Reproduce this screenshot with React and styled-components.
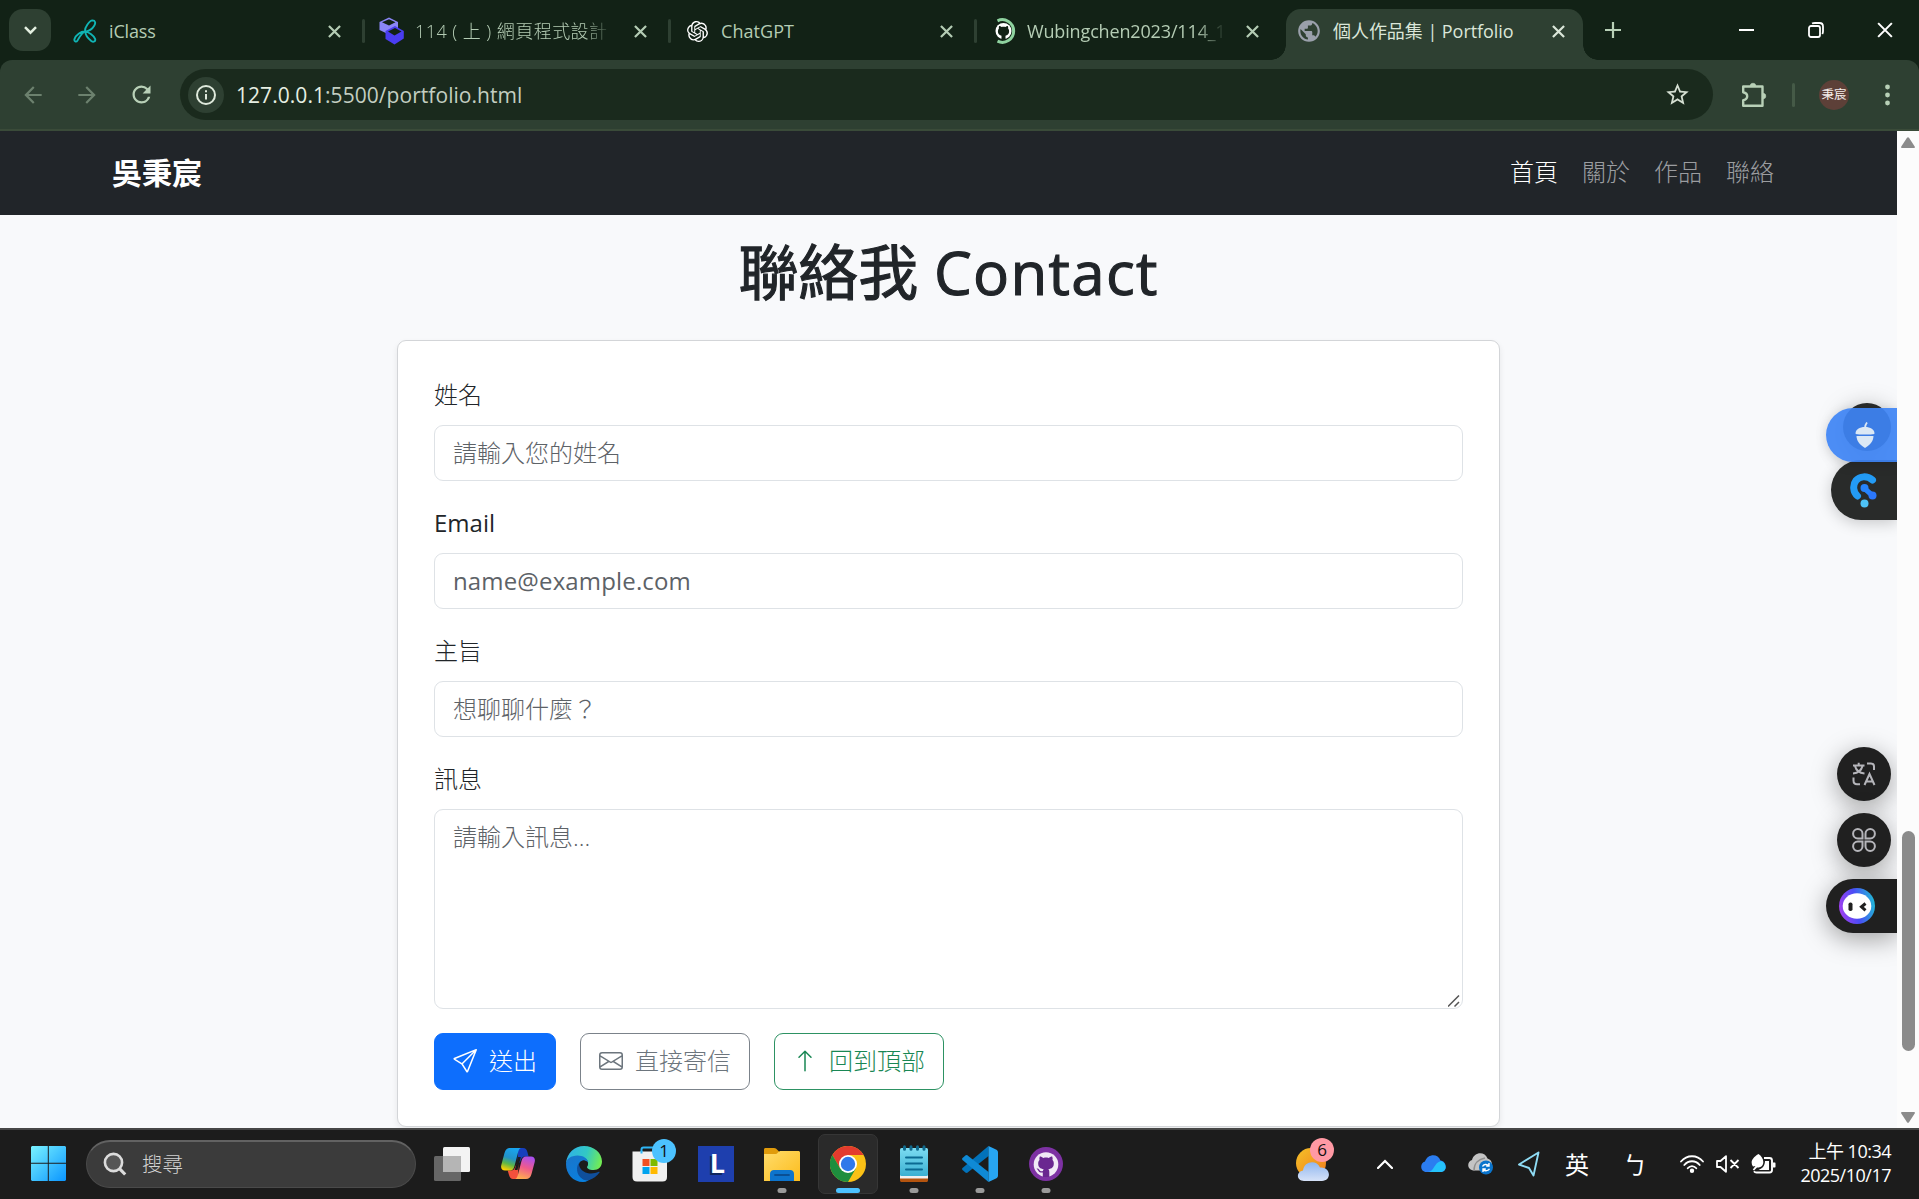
import React from "react";
import styled, { createGlobalStyle, css } from "styled-components";
import { BsSend, BsEnvelope, BsArrowUp } from "react-icons/bs";
import { SiOpenai } from "react-icons/si";
import {
  MdArrowBack,
  MdArrowForward,
  MdRefresh,
  MdStarBorder,
  MdPublic,
} from "react-icons/md";

const ui = `"Open Sans", "Noto Sans CJK TC", sans-serif`;

const GlobalStyle = createGlobalStyle`
  *, *::before, *::after { box-sizing: border-box; }
  html, body { margin: 0; padding: 0; overflow: hidden; }
  body { font-family: ${ui}; background: #f8f9fb; }
  svg { display: block; flex: none; }
`;

const Screen = styled.div`
  width: 1919px;
  height: 1199px;
  display: flex;
  flex-direction: column;
  overflow: hidden;
`;

/* ---------- Browser chrome ---------- */

const TabStrip = styled.div`
  height: 60px;
  flex: none;
  display: flex;
  background: #122216;
  padding: 9px 0 0 9px;
`;

const TabSearch = styled.div`
  width: 42px;
  height: 42px;
  margin-right: 11px;
  border-radius: 14px;
  background: #2e4032;
  display: flex;
  align-items: center;
  justify-content: center;
`;

const Tab = styled.div`
  position: relative;
  width: 306px;
  height: 51px;
  padding: 0 0 7px 11px;
  display: flex;
  align-items: center;
  color: ${(p) => (p.$active ? "#dbe6d9" : "#b4ccb4")};
  ${(p) =>
    p.$active &&
    css`
      width: 297px;
      background: #2e4032;
      border-radius: 15px 15px 0 0;
      &::before,
      &::after {
        content: "";
        position: absolute;
        bottom: 0;
        width: 15px;
        height: 15px;
      }
      &::before {
        left: -15px;
        background: radial-gradient(circle at 0 0, transparent 14.5px, #2e4032 15px);
      }
      &::after {
        right: -15px;
        background: radial-gradient(circle at 100% 0, transparent 14.5px, #2e4032 15px);
      }
    `}
`;

const TabIcon = styled.div`
  width: 24px;
  height: 24px;
  flex: none;
  display: flex;
  align-items: center;
  justify-content: center;
  margin-right: 12px;
`;

const TabTitle = styled.div`
  width: 201px;
  flex: none;
  overflow: hidden;
  white-space: nowrap;
  font-size: 18px;
  line-height: 30px;
  letter-spacing: ${(p) => p.$track || 0}px;
  font-weight: ${(p) => p.$weight || 400};
  ${(p) =>
    p.$fade &&
    css`
      mask-image: linear-gradient(90deg, #000 168px, transparent 199px);
    `}
`;

const CloseSlot = styled.div`
  width: 24px;
  margin-left: 12px;
  display: flex;
  justify-content: center;
`;

const Separator = styled.div`
  width: 3px;
  height: 24px;
  border-radius: 2px;
  margin-left: 16px;
  background: #2e4032;
`;

const NewTab = styled.div`
  width: 60px;
  height: 42px;
  display: flex;
  align-items: center;
  justify-content: center;
`;

const WindowControls = styled.div`
  margin-left: auto;
  height: 41px;
  display: flex;
  color: #fff;
`;

const WindowButton = styled.div`
  width: 69px;
  display: flex;
  align-items: center;
  justify-content: center;
`;

const Toolbar = styled.div`
  height: 71px;
  flex: none;
  display: flex;
  background: #122216;
`;

const ToolbarFace = styled.div`
  flex: 1;
  height: 71px;
  border-radius: 12px 12px 0 0;
  border-bottom: 2px solid #3a4b39;
  background: #2e4032;
  display: flex;
  align-items: center;
  padding: 0 5px 0 6px;
  color: #b8d0b7;
`;

const ToolButton = styled.div`
  width: 54px;
  height: 51px;
  margin-left: ${(p) => p.$gap || 0}px;
  display: flex;
  align-items: center;
  justify-content: center;
  opacity: ${(p) => (p.$dim ? 0.45 : 1)};
`;

const Omnibox = styled.div`
  width: 1533px;
  height: 51px;
  margin-left: 12px;
  padding: 0 22px 0 8px;
  border-radius: 26px;
  background: #1a2a1d;
  display: flex;
  align-items: center;
`;

const SiteInfo = styled.div`
  width: 36px;
  height: 36px;
  border-radius: 50%;
  background: #2e4032;
  display: flex;
  align-items: center;
  justify-content: center;
`;

const Url = styled.div`
  flex: 1;
  margin-left: 12px;
  font-size: 21px;
  line-height: 28px;
  letter-spacing: 0.05px;
  color: #c3cec1;
  b {
    font-weight: 400;
    color: #e6efe3;
  }
`;

const ToolDivider = styled.div`
  width: 3px;
  height: 24px;
  border-radius: 2px;
  margin: 0 24px 0 11px;
  background: #455a47;
`;

const Avatar = styled.div`
  width: 30px;
  height: 30px;
  border-radius: 50%;
  background: #5d4038;
  color: #f5eeec;
  font-size: 12.5px;
  font-weight: 400;
  line-height: 29px;
  text-align: center;
  white-space: nowrap;
`;

/* ---------- Page ---------- */

const Viewport = styled.div`
  height: 997px;
  flex: none;
  display: flex;
  position: relative;
`;

const Page = styled.div`
  width: 1897px;
  height: 997px;
  overflow: hidden;
  display: flex;
  flex-direction: column;
  align-items: center;
  background: #f8f9fb;
  color: #212529;
`;

const Navbar = styled.nav`
  width: 100%;
  height: 84px;
  flex: none;
  padding: 0 111px 2px 112px;
  display: flex;
  align-items: center;
  justify-content: space-between;
  background: #212529;
`;

const Brand = styled.div`
  font-size: 30px;
  font-weight: 700;
  line-height: 45px;
  color: #fff;
`;

const NavLinks = styled.div`
  display: flex;
`;

const NavLink = styled.a`
  padding: 0 12px;
  font-size: 24px;
  font-weight: 300;
  line-height: 36px;
  color: ${(p) => (p.$active ? "#fff" : "#9b9da0")};
`;

const Title = styled.h2`
  margin: 21px 0 32px;
  font-size: 60px;
  font-weight: 400;
  line-height: 72px;
  -webkit-text-stroke: 1.1px #212529;
  span {
    letter-spacing: 1.3px;
  }
`;

const Card = styled.form`
  width: 1103px;
  height: 787px;
  flex: none;
  padding: 36px;
  border: 1px solid #d3d5d8;
  border-radius: 9px;
  background: #fff;
  box-shadow: 0 3px 6px rgba(0, 0, 0, 0.075);
  display: flex;
  flex-direction: column;
`;

const Field = styled.div`
  display: flex;
  flex-direction: column;
  margin-bottom: 24px;
  position: relative;
`;

const Label = styled.label`
  margin-bottom: 12px;
  font-size: 24px;
  line-height: 36px;
  font-weight: ${(p) => p.$weight || 300};
`;

const controlStyle = css`
  display: block;
  width: 100%;
  margin: 0;
  border: 1px solid #dee2e6;
  border-radius: 9px;
  outline: none;
  background: #fff;
  font-family: ${ui};
  font-size: 24px;
  line-height: 36px;
  font-weight: ${(p) => p.$weight || 300};
  letter-spacing: ${(p) => p.$track || 0}px;
  &::placeholder {
    color: #5d6267;
    opacity: 1;
  }
`;

const Input = styled.input`
  ${controlStyle}
  height: 56px;
  padding: 8px 18px 10px;
`;

const TextArea = styled.textarea`
  ${controlStyle}
  height: 200px;
  padding: 9px 18px 8px;
  resize: none;
`;

const Grip = styled.svg`
  position: absolute;
  right: 3px;
  bottom: 2px;
`;

const Actions = styled.div`
  display: flex;
  gap: 24px;
`;

const Button = styled.button`
  height: 57px;
  padding: 0 18px 2px;
  display: flex;
  align-items: center;
  gap: 12px;
  border: 1px solid ${(p) => p.$edge};
  border-radius: 9px;
  background: ${(p) => p.$fill || "#fff"};
  color: ${(p) => p.$ink};
  font-family: ${ui};
  font-size: 24px;
  font-weight: 300;
  line-height: 36px;
`;

const Scrollbar = styled.div`
  width: 22px;
  height: 997px;
  padding: 6px 0 5px;
  background: #fcfcfc;
  display: flex;
  flex-direction: column;
  align-items: center;
`;

const Thumb = styled.div`
  width: 13px;
  height: 220px;
  margin-top: 683px;
  margin-bottom: auto;
  border-radius: 7px;
  background: #8b8b8b;
`;

const Floating = styled.div`
  position: absolute;
  top: ${(p) => p.$top}px;
  right: ${(p) => (p.$round ? 28 : 22)}px;
  width: ${(p) => p.$w}px;
  height: ${(p) => p.$h}px;
  padding-left: ${(p) => p.$pad || 0}px;
  border-radius: ${(p) => (p.$round ? "50%" : `${p.$h / 2}px 0 0 ${p.$h / 2}px`)};
  background: ${(p) => p.$bg || "#202020"};
  box-shadow: ${(p) => p.$shadow || "0 6px 26px rgba(0, 0, 0, 0.36)"};
  clip-path: inset(-60px ${(p) => (p.$round ? -6 : 0)}px -60px -60px);
  display: flex;
  align-items: center;
  justify-content: ${(p) => (p.$round ? "center" : "flex-start")};
`;

/* ---------- Taskbar ---------- */

const Taskbar = styled.div`
  height: 71px;
  flex: none;
  border-top: 2px solid #474747;
  background: #1c1c1c;
  display: flex;
  align-items: center;
  padding-bottom: 2px;
  color: #fff;
`;

const StartButton = styled.div`
  width: 86px;
  padding: 0 0 0 31px;
`;

const SearchBox = styled.div`
  width: 330px;
  height: 48px;
  margin-right: 3px;
  border: 1px solid #4a4a4a;
  border-top: 2px solid #626262;
  border-radius: 24px;
  background: #3b3b3b;
  display: flex;
  align-items: center;
  padding: 0 0 1px 16px;
  font-size: 20.5px;
  font-weight: 300;
  line-height: 30px;
  color: #d2d2d2;
  gap: 15px;
`;

const AppSlot = styled.div`
  position: relative;
  width: 66px;
  height: 69px;
  display: flex;
  align-items: center;
  justify-content: center;
  &::after {
    content: "";
    position: absolute;
    left: 50%;
    bottom: 5px;
    transform: translateX(-50%);
    height: 5px;
    border-radius: 3px;
    width: ${(p) => (p.$active ? 24 : p.$open ? 9 : 0)}px;
    background: ${(p) => (p.$active ? "#4cc2ff" : "#9a9a9a")};
  }
`;

const ActiveTile = styled.div`
  width: 60px;
  height: 60px;
  border: 1px solid #363636;
  border-radius: 7px;
  background: #2a2a2a;
  display: flex;
  align-items: center;
  justify-content: center;
`;

const Badge = styled.div`
  position: absolute;
  top: ${(p) => p.$top}px;
  left: ${(p) => p.$left}px;
  width: 24px;
  height: 24px;
  border-radius: 50%;
  background: ${(p) => p.$bg};
  color: #111;
  font-size: 17px;
  line-height: 24px;
  text-align: center;
`;

const Tray = styled.div`
  margin-left: auto;
  height: 69px;
  display: flex;
  align-items: center;
`;

const TraySlot = styled.div`
  position: relative;
  width: ${(p) => p.$w}px;
  height: 69px;
  display: flex;
  align-items: center;
  justify-content: center;
  font-size: 24px;
`;

const Clock = styled.div`
  width: 106px;
  padding-bottom: 1px;
  margin-right: 28px;
  text-align: right;
  white-space: nowrap;
  font-size: 18px;
  line-height: 24px;
  letter-spacing: -0.5px;
`;

/* ---------- Drawings ---------- */

const CloseIcon = ({ size = 13, stroke = 2.4 }) => (
  <svg width={size} height={size} viewBox="0 0 14 14" stroke="currentColor" strokeWidth={stroke} fill="none">
    <path d="M1 1l12 12M13 1L1 13" />
  </svg>
);

const IClassIcon = () => (
  <svg width="24" height="24" viewBox="0 0 24 24" fill="none" stroke="#10b5b5" strokeWidth="1.9" strokeLinejoin="round">
    <path d="M12.3 12.6C11 9 16.5 1.5 19.5 1.4c3 0 3.3 2.800 1.700 5.300C19 10.500 15.500 12 12.300 12.600C9 13 6 19 4.500 21.500c-1.300 2-3.700 1-3-1.500C2.500 16.500 8 12 12.300 12.600z" />
    <path d="M12.300 12.600c3 0 8.500 3.900 9.800 7.200c.8 2.800-1.700 3.700-3.800 2.200c-3-2.300-6-5.500-6-9.400z" />
  </svg>
);

const CubesIcon = () => (
  <svg width="25" height="28" viewBox="0 0 25 28">
    <path d="M.5 5L10 .5l9 4.500v8L10 17.500.5 13z" fill="#8a86f6" />
    <path d="M3 5.300L10 2.200l6.500 3-6.500 3.300z" fill="#122216" />
    <path d="M6.500 14L16 9l8.800 5v7.500L15.500 27.500 6.500 22z" fill="#4a3df2" />
    <path d="M9 14.500l7-3.500 6.500 3.500-7 4z" fill="#122216" />
  </svg>
);

const LoadingGithub = () => (
  <svg width="30" height="30" viewBox="0 0 30 30">
    <path d="M9.500 4.800A11.300 11.300 0 1 1 9.500 25.200" fill="none" stroke="#8fd3a0" strokeWidth="3" />
    <circle cx="15.500" cy="15" r="8" fill="#fff" />
    <path
      d="M13.500 23v-3.200c-2.800-.8-3.600-2.300-3.600-4.600 0-1.200.4-2 1-2.700-.2-.8-.1-1.800.2-2.500 1 0 1.800.4 2.500 1 1.200-.3 2.600-.3 3.800 0 .7-.6 1.500-1 2.500-1 .3.700.4 1.700.2 2.500.6.700 1 1.500 1 2.700 0 2.300-.8 3.800-3.600 4.600V23z"
      fill="#122216"
    />
  </svg>
);

const InfoIcon = () => (
  <svg width="20" height="20" viewBox="0 0 20 20" fill="none" stroke="#dfe9dc" strokeWidth="2">
    <circle cx="10" cy="10" r="9" />
    <path d="M10 9v5.500M10 5.300v2" />
  </svg>
);

const ExtensionsIcon = () => (
  <svg width="26" height="26" viewBox="0 0 26 26" stroke="#b8d0b7">
    <path
      d="M2.200 4.500h19.300v19.300H2.200v-5.600c2.600-.6 4-2 4-4s-1.400-3.500-4-4z"
      fill="none"
      strokeWidth="2.400"
      strokeLinejoin="round"
    />
    <path d="M9.200 4a2.800 2.800 0 0 1 5.600 0zM22 11.300a2.800 2.800 0 0 1 0 5.600z" fill="#b8d0b7" strokeWidth=".6" />
  </svg>
);

const WindowsLogo = () => (
  <svg width="35" height="35" viewBox="0 0 35 35">
    <defs>
      <linearGradient id="win" x1="0" y1="0" x2="1" y2="1" gradientUnits="objectBoundingBox">
        <stop offset="0" stopColor="#7af3ff" />
        <stop offset="1" stopColor="#0a95ff" />
      </linearGradient>
    </defs>
    <path fill="url(#win)" d="M1 0h15.800v16.800H0V1zM17.800 0H34l1 1v15.800H17.800zM0 17.800h16.800V35H1l-1-1zM17.800 17.800H35V34l-1 1H17.800z" />
  </svg>
);

const SearchGlyph = () => (
  <svg width="24" height="24" viewBox="0 0 24 24" fill="none" stroke="#dcdcdc" strokeWidth="2.600">
    <circle cx="10.500" cy="10.500" r="8.600" fill="#565656" />
    <path d="M16.500 16.700l5.700 5.800" strokeWidth="3.200" />
  </svg>
);

const TaskView = () => (
  <svg width="36" height="36" viewBox="0 0 36 36">
    <rect x="9" y="1" width="27" height="25" rx="1.500" fill="#f3f3f3" />
    <rect x="0" y="10" width="27" height="25" rx="1.500" fill="#666" />
    <rect x="9" y="10" width="18" height="16" fill="#b5b5b5" />
  </svg>
);

const Copilot = () => (
  <svg width="34" height="31" viewBox="0 0 34 31">
    <defs>
      <linearGradient id="cpA" x1=".6" y1="0" x2=".3" y2="1">
        <stop offset="0" stopColor="#19a5f0" />
        <stop offset=".45" stopColor="#2292c8" />
        <stop offset=".72" stopColor="#5db648" />
        <stop offset="1" stopColor="#ffd000" />
      </linearGradient>
      <linearGradient id="cpB" x1=".7" y1="0" x2=".4" y2="1">
        <stop offset="0" stopColor="#a84ff0" />
        <stop offset=".5" stopColor="#ef5a8c" />
        <stop offset="1" stopColor="#ffac50" />
      </linearGradient>
    </defs>
    <path d="M17 0h5c2.500 0 3.700 1.500 4.400 4l1.200 4.500H24c-2.500 0-3.700 1.500-4.500 4.500l-3 4.500z" fill="#163fbd" />
    <path d="M17 31h-5c-2 0-3.200-1.500-4-4l-1.300-4.500H10c2.500 0 3.700-1.500 4.500-4.500l3-4.500z" fill="#f2503c" />
    <path d="M9 0h11.500c-2 0-2.800 2-3.500 4.500L13.500 18c-.8 3-2 4.500-4.500 4.500H4c-3 0-4.500-2-3.700-5.500L3.500 5C4.500 1.600 6 0 9 0z" fill="url(#cpA)" />
    <path d="M25 31H13.500c2 0 2.800-2 3.500-4.500L20.500 13c.8-3 2-4.500 4.500-4.500h5c3 0 4.500 2 3.700 5.500L30.500 26c-1 3.400-2.500 5-5.500 5z" fill="url(#cpB)" />
    <path d="M17.200 9h2.600l-3.300 13h-2.800z" fill="#1c1c1c" />
  </svg>
);

const Edge = () => (
  <svg width="36" height="36" viewBox="0 0 36 36">
    <defs>
      <linearGradient id="edT" x1="0" y1=".3" x2="1" y2=".5">
        <stop offset="0" stopColor="#2fb0e8" />
        <stop offset=".55" stopColor="#32c8c4" />
        <stop offset="1" stopColor="#72ec54" />
      </linearGradient>
      <linearGradient id="edB" x1="0" y1="0" x2=".6" y2="1">
        <stop offset="0" stopColor="#1b74c8" />
        <stop offset="1" stopColor="#0880e0" />
      </linearGradient>
    </defs>
    <path d="M0 17C1 7 8.500 0 18 0c10 0 18 7 18 15.500 0 5-3.500 8.500-8.500 8.500-4.500 0-6.500-1.500-6.500-3 0-1 1-1.500 1-4 0-3.500-4-6-8.500-6C7.500 11 2 13.500 0 17z" fill="url(#edT)" />
    <path d="M0 18c0-5 5-8.500 11.500-8.500 5.500 0 10.500 2.700 10.500 7.500-1-1.600-2.700-2.500-4.500-2.500-4 0-6 4-4 9 2.300 6.500 9 8 13 7-2.500 3.500-6 5.500-9.500 5.500C7 36 0 28 0 18z" fill="url(#edB)" />
    <path d="M13.800 16C9.500 20 10 29 16.500 33c2 1.300 4.300 1.700 6 1.300C27 33 31 30 33.500 26.500c.4-.7-.2-1-.8-.7C25 29.500 15.500 27 13.300 20c-.5-1.600-.2-3 .5-4z" fill="#0f4f9c" />
    <path d="M22 17c-.8-2-3-3-5-2.400-2.800 1-3 5-1.500 7.400 1.500 2.300 4 3.800 7 4.200-2-1.200-2.500-3.400-1.500-5.200.7-1.200 1-2.600 1-4z" fill="#1c1c1c" />
  </svg>
);

const Store = () => (
  <svg width="36" height="36" viewBox="0 0 36 36">
    <path d="M9.500 8V3.500c0-1.300.7-2 2-2h13c1.300 0 2 .7 2 2V8" fill="none" stroke="#2eb5f5" strokeWidth="2" />
    <path d="M.5 5.500h34.500V31c0 3-1.500 4.500-4.500 4.500H5C2 35.500.5 34 .5 31z" fill="#f0f0f0" />
    <path d="M9.500 5v2.500" stroke="#2eb5f5" strokeWidth="2" />
    <rect x="10.500" y="13" width="7" height="7" fill="#f25022" />
    <rect x="18.500" y="13" width="7" height="7" fill="#7fba00" />
    <rect x="10.500" y="21" width="7" height="7" fill="#00a4ef" />
    <rect x="18.500" y="21" width="7" height="7" fill="#ffb900" />
  </svg>
);

const LTile = styled.div`
  width: 36px;
  height: 36px;
  padding-left: 3px;
  background: #1e3fae;
  color: #fff;
  font-size: 27px;
  font-weight: 700;
  line-height: 34px;
  text-align: center;
  text-shadow: -2px 2px 0 #10275e;
`;

const Folder = () => (
  <svg width="36" height="36" viewBox="0 0 36 36">
    <defs>
      <linearGradient id="fd" x1="0" y1="0" x2="1" y2="1">
        <stop offset="0" stopColor="#ffdc6b" />
        <stop offset="1" stopColor="#fcbc1c" />
      </linearGradient>
    </defs>
    <path d="M0 3.500C0 2.500.7 2 1.500 2H10c1.500 0 2.500.8 3.500 2l1.500 1.500V10H0z" fill="#e09b0b" />
    <path d="M0 8h11c1.500 0 2-.5 3-1.500s1.500-1.500 3-1.500h17.500c.8 0 1.500.7 1.500 1.500V35H0z" fill="url(#fd)" />
    <path d="M6 35v-7c0-2.500 1.500-4 4-4h16c2.500 0 4 1.500 4 4v7z" fill="#0d74cd" />
    <path d="M11 29h14" stroke="#0a4f94" strokeWidth="1.800" strokeLinecap="round" />
  </svg>
);

const Chrome = () => (
  <svg width="36" height="36" viewBox="0 0 36 36">
    <circle cx="18" cy="18" r="18" fill="#fbc116" />
    <path d="M2.400 9A18 18 0 0 1 33.600 9H18L10.200 22.500z" fill="#e33b2e" />
    <path d="M2.400 9A18 18 0 0 0 18 36L25.800 22.500 10.200 22.500z" fill="#1e8e3e" />
    <circle cx="18" cy="18" r="9" fill="#fff" />
    <circle cx="18" cy="18" r="7.200" fill="#2f78ea" />
  </svg>
);

const Notepad = () => (
  <svg width="28" height="37" viewBox="0 0 28 37">
    <defs>
      <linearGradient id="np" x1="0" y1="0" x2="0" y2="1">
        <stop offset="0" stopColor="#7cdcf2" />
        <stop offset="1" stopColor="#3bb0d2" />
      </linearGradient>
    </defs>
    <path d="M0 28h28v7.500c0 .8-.7 1.500-1.500 1.500h-25C.7 37 0 36.300 0 35.500z" fill="#b4540f" />
    <path d="M0 28h28v5.500H0z" fill="#f0f0f0" />
    <rect x="0" y="3" width="28" height="28" rx="1.500" fill="url(#np)" />
    <path d="M4.500 1.800v2.500M11 1.800v2.500M17.500 1.800v2.500M24 1.800v2.500" stroke="#10698c" strokeWidth="3" strokeLinecap="round" />
    <path d="M6 12.500h16M6 18.500h16M6 24.500h16" stroke="#0b6a92" strokeWidth="2" strokeLinecap="round" />
  </svg>
);

const VsCode = () => (
  <svg width="36" height="36" viewBox="0 0 36 36">
    <path d="M26.500 0v10L5 27l-1.300-.2L.5 24c-.6-.6-.6-1.400 0-2z" fill="#0272ba" />
    <path d="M26.500 36V26L5 9l-1.300.2L.5 12c-.6.600-.6 1.400 0 2z" fill="#0f8ad6" />
    <path d="M26.500 0L34 3.500c1.300.6 2 1.500 2 3v23c0 1.500-.7 2.400-2 3L26.500 36z" fill="#27a5f2" />
  </svg>
);

const GithubDesktop = () => (
  <svg width="34" height="34" viewBox="0 0 34 34">
    <circle cx="17" cy="17" r="17" fill="#7d31a3" />
    <circle cx="17" cy="17.500" r="12.300" fill="#f1e9f6" />
    <path
      d="M13.800 30v-4.600c-2 .4-3.500-.1-4.300-1.500-.5-1-1-1.700-1.900-2.200.9-.4 2 0 2.700 1 1 1.600 2 1.900 3.600 1.300.1-.8.400-1.300.8-1.700-3.500-.5-5.500-2-5.500-5.700 0-1.500.4-2.600 1.300-3.600-.3-1.200-.2-2.400.3-3.600 1.300 0 2.500.7 3.600 1.500 1.700-.5 3.500-.5 5.200 0 1.100-.8 2.300-1.500 3.600-1.500.5 1.200.6 2.400.3 3.600.9 1 1.300 2.100 1.300 3.600 0 3.700-2 5.200-5.500 5.700.7.600 1 1.400 1 2.600V30z"
      fill="#6a2790"
    />
  </svg>
);

const Weather = () => (
  <svg width="36" height="36" viewBox="0 0 36 36">
    <defs>
      <linearGradient id="sun" x1="0" y1="0" x2="1" y2="1">
        <stop offset="0" stopColor="#f5c228" />
        <stop offset="1" stopColor="#f07a1c" />
      </linearGradient>
      <linearGradient id="cld" x1="0" y1="0" x2="0" y2="1">
        <stop offset="0" stopColor="#8fb6ee" />
        <stop offset="1" stopColor="#d6e2f8" />
      </linearGradient>
    </defs>
    <circle cx="16" cy="17" r="15" fill="url(#sun)" />
    <path d="M9 35c-8 0-8-9.500-1-10.500C9 14.500 22 13.500 25 21.500c11-1 12 13.500 2 13.500z" fill="url(#cld)" />
  </svg>
);

const OneDrive = () => (
  <svg width="25" height="18" viewBox="0 0 25 18">
    <path d="M5.500 17C-1 17-1.500 8 4 6.500 7-1.500 17-1.500 19.500 5.500 26 6 27 17 19.500 17z" fill="#2b7df0" />
    <path d="M7 17c6 0 6-9.500 13-11 6.500 2 6 11-.5 11z" fill="#25c2fb" />
  </svg>
);

const SyncCloud = () => (
  <svg width="26" height="22" viewBox="0 0 26 22">
    <path d="M5.500 17.500C-1 17-1.500 8.500 4 7 6-1.500 17-2 19.500 5.500 26 7 25 17.500 19.500 17.500z" fill="#c4c4c4" />
    <path d="M6 17.500C6 10 11 6 17 5" fill="none" stroke="#8f8f8f" strokeWidth="1.500" />
    <circle cx="18" cy="14.500" r="7" fill="#0a74cc" />
    <path d="M14.500 13.500c1-2.200 4.500-2.800 6-.8M21 10v3h-2.800M21.500 15.700c-1 2.200-4.500 2.800-6 .8M15 19v-3h2.800" fill="none" stroke="#fff" strokeWidth="1.400" />
  </svg>
);

const PlaneIcon = () => (
  <svg width="22" height="26" viewBox="0 0 22 26" fill="none" stroke="#8fdcf5" strokeWidth="1.900" strokeLinejoin="round">
    <path d="M20.500 1.500L1 13.500l10 3.500 4.500 7.500z" />
  </svg>
);

const WifiIcon = () => (
  <svg width="24" height="18" viewBox="0 0 24 18" fill="none" stroke="#fff" strokeWidth="1.800" strokeLinecap="round">
    <path d="M1 6.500C7-.5 17-.5 23 6.500M4.300 10C8.500 5 15.500 5 19.700 10M7.700 13.300c2.400-3 6.200-3 8.600 0" />
    <circle cx="12" cy="15.700" r="1.300" fill="#fff" />
  </svg>
);

const MuteIcon = () => (
  <svg width="24" height="18" viewBox="0 0 24 18" fill="none" stroke="#fff" strokeWidth="1.800" strokeLinejoin="round">
    <path d="M1 6h3.500L10 1.200v15.600L4.500 12H1zM14.500 5l8 8M22.500 5l-8 8" />
  </svg>
);

const BatteryIcon = () => (
  <svg width="25" height="20" viewBox="0 0 25 20">
    <path d="M13 4h5.500c1.500 0 2.500 1 2.500 2.500V16c0 1.500-1 2.500-2.500 2.500h-13c-1.200 0-2-.5-2.500-1.300" fill="none" stroke="#fff" strokeWidth="1.900" />
    <path d="M22 8.500h1.500c.8 0 1 .5 1 1v3c0 .6-.2 1-1 1H22z" fill="#fff" />
    <path d="M7.500 0c2.700 2 4.800 4.500 4.800 8S10 13.800 6 13.500L3 16.500l-1.200-1L4.500 12 2 12.500C-.5 9 0 4.500 7.500 0zM14 7h4v9H7.500c4-1.500 6.500-4.500 6.500-9z" fill="#fff" />
  </svg>
);

const Acorn = () => (
  <svg width="20" height="26" viewBox="0 0 20 26" fill="#dbe8f5">
    <path d="M10 6c0-2 .8-4 2-5.500" fill="none" stroke="#dbe8f5" strokeWidth="1.800" />
    <path d="M.5 11.500C.5 7.500 4.500 5 10 5s9.500 2.500 9.500 6.500c0 .8-3 1-9.500 1s-9.500-.2-9.500-1z" />
    <path d="M1.500 14h17c0 5-3.500 9-8.500 12-5-3-8.500-7-8.500-12z" />
  </svg>
);

const HookIcon = () => (
  <svg width="27" height="35" viewBox="0 0 27 35" fill="none" strokeLinecap="round">
    <path d="M22.500 7C17 2.500 9.500 3 6 7.500S3 19 7.500 23" stroke="#239bf5" strokeWidth="7" />
    <path d="M14.500 15.500l8 7" stroke="#2683fb" strokeWidth="5" />
    <circle cx="14.500" cy="15" r="4" fill="#2683fb" />
    <circle cx="22.500" cy="22.500" r="4" fill="#2b77fc" />
    <circle cx="14.500" cy="30.500" r="4" fill="#4ec3f7" />
  </svg>
);

const TranslateIcon = () => (
  <svg width="24" height="24" viewBox="0 0 24 24" fill="none" stroke="#b5b5ba" strokeWidth="2">
    <path d="M1 3.500h11.500M6.700.8v2.700M3 4c1 4 4.500 7 9.500 7.500M10.500 4c-1 4-4.500 7-9.500 7.500" />
    <path d="M15 1.500h4c2 0 3 1 3 3V8M1.500 15.500v3c0 2.500 1 3.800 3.500 3.800h3M12.500 23l5-11 5 11M14.300 19.500h6.500" />
  </svg>
);

const CloverIcon = () => (
  <svg width="24" height="24" viewBox="0 0 24 24" fill="none" stroke="#b5b5ba" strokeWidth="2">
    <path d="M10.500 10.500H5.800A4.700 4.700 0 1 1 10.500 5.800zM13.500 10.500V5.800a4.700 4.700 0 1 1 4.700 4.700zM10.500 13.500v4.700a4.700 4.700 0 1 1-4.700-4.700zM13.500 13.500h4.700a4.700 4.700 0 1 1-4.700 4.700z" />
  </svg>
);

const BotIcon = () => (
  <svg width="36" height="36" viewBox="0 0 36 36">
    <defs>
      <linearGradient id="bot" x1="0" y1=".7" x2="1" y2=".5">
        <stop offset="0" stopColor="#a63ff0" />
        <stop offset=".5" stopColor="#4a4cf5" />
        <stop offset="1" stopColor="#22b5d8" />
      </linearGradient>
    </defs>
    <circle cx="18" cy="18" r="18" fill="url(#bot)" />
    <ellipse cx="18" cy="18" rx="14.300" ry="12.800" fill="#fff" />
    <rect x="9.500" y="14.500" width="4" height="8.500" rx="1.800" fill="#202020" />
    <path d="M26.500 15.500L22.500 18.800l4 3.500" fill="none" stroke="#202020" strokeWidth="3" />
  </svg>
);

const Triangle = ({ down }) => (
  <svg width="14" height="11" viewBox="0 0 14 11" fill="#8b8b8b">
    <path d={down ? "M1 0h12c1 0 1.200.8.700 1.600L8 10.200c-.5.800-1.500.8-2 0L.3 1.600C-.2.8 0 0 1 0z" : "M1 11h12c1 0 1.200-.8.700-1.600L8 .8C7.500 0 6.500 0 6 .8L.3 9.400C-.2 10.200 0 11 1 11z"} />
  </svg>
);

/* ---------- Composition ---------- */

const tabs = [
  { title: "iClass", icon: <IClassIcon />, track: -0.15 },
  { title: "114 ( 上 ) 網頁程式設計", icon: <CubesIcon />, fade: true, weight: 300, track: 0.45 },
  { title: "ChatGPT", icon: <SiOpenai size={21} color="#fff" />, track: 0.05 },
  { title: "Wubingchen2023/114_1", icon: <LoadingGithub />, fade: true, track: -0.15 },
  { title: "個人作品集 | Portfolio", icon: <MdPublic size={26} color="#9aa0ab" />, active: true, track: -0.05 },
];

export default function App() {
  return (
    <Screen>
      <GlobalStyle />
      <TabStrip>
        <TabSearch>
          <svg width="13" height="9" viewBox="0 0 13 9" fill="none" stroke="#e3efe0" strokeWidth="2.500">
            <path d="M1 1.200l5.500 5.500L12 1.200" />
          </svg>
        </TabSearch>
        {tabs.map((t, i) => (
          <Tab key={t.title} $active={t.active}>
            <TabIcon>{t.icon}</TabIcon>
            <TabTitle $fade={t.fade} $track={t.track} $weight={t.weight}>
              {t.title}
            </TabTitle>
            <CloseSlot>
              <CloseIcon />
            </CloseSlot>
            {i < 3 && <Separator />}
          </Tab>
        ))}
        <NewTab>
          <svg width="16" height="16" viewBox="0 0 16 16" stroke="#b8d0b7" strokeWidth="2.200">
            <path d="M8 0v16M0 8h16" />
          </svg>
        </NewTab>
        <WindowControls>
          <WindowButton>
            <svg width="15" height="2" viewBox="0 0 15 2">
              <path d="M0 1h15" stroke="#fff" strokeWidth="2" />
            </svg>
          </WindowButton>
          <WindowButton>
            <svg width="16" height="16" viewBox="0 0 16 16" fill="none" stroke="#fff" strokeWidth="1.800">
              <rect x="1" y="4" width="11" height="11" rx="2" />
              <path d="M4 1.500C5 1 6 1 7 1h4.500C14 1 15 2 15 4.500V9c0 1.200 0 2-.7 3" />
            </svg>
          </WindowButton>
          <WindowButton>
            <CloseIcon size={16} stroke={1.8} />
          </WindowButton>
        </WindowControls>
      </TabStrip>

      <Toolbar>
        <ToolbarFace>
          <ToolButton $dim>
            <MdArrowBack size={26} />
          </ToolButton>
          <ToolButton $dim>
            <MdArrowForward size={26} />
          </ToolButton>
          <ToolButton>
            <MdRefresh size={27} />
          </ToolButton>
          <Omnibox>
            <SiteInfo>
              <InfoIcon />
            </SiteInfo>
            <Url>
              <b>127.0.0.1</b>:5500/portfolio.html
            </Url>
            <MdStarBorder size={27} color="#d5dfd2" />
          </Omnibox>
          <ToolButton $gap={14}>
            <ExtensionsIcon />
          </ToolButton>
          <ToolDivider />
          <Avatar>秉宸</Avatar>
          <ToolButton $gap={11}>
            <svg width="5" height="26" viewBox="0 0 5 26" fill="#b8d0b7">
              <circle cx="2.500" cy="5" r="2.400" />
              <circle cx="2.500" cy="13" r="2.400" />
              <circle cx="2.500" cy="21" r="2.400" />
            </svg>
          </ToolButton>
        </ToolbarFace>
      </Toolbar>

      <Viewport>
        <Page>
          <Navbar>
            <Brand>吳秉宸</Brand>
            <NavLinks>
              <NavLink $active>首頁</NavLink>
              <NavLink>關於</NavLink>
              <NavLink>作品</NavLink>
              <NavLink>聯絡</NavLink>
            </NavLinks>
          </Navbar>
          <Title>
            聯絡我 <span>Contact</span>
          </Title>
          <Card>
            <Field>
              <Label>姓名</Label>
              <Input placeholder="請輸入您的姓名" />
            </Field>
            <Field>
              <Label $weight={400}>Email</Label>
              <Input $weight={400} $track={0.15} placeholder="name@example.com" />
            </Field>
            <Field>
              <Label>主旨</Label>
              <Input placeholder="想聊聊什麼？" />
            </Field>
            <Field>
              <Label>訊息</Label>
              <TextArea placeholder="請輸入訊息..." />
              <Grip width="12" height="12" viewBox="0 0 12 12" stroke="#555" strokeWidth="1.500">
                <path d="M0 11.500L11 .5M6.500 11.500l4.500-4.500" />
              </Grip>
            </Field>
            <Actions>
              <Button type="button" $edge="#0d6efd" $fill="#0d6efd" $ink="#fff">
                <BsSend size={24} />
                送出
              </Button>
              <Button type="button" $edge="#7b828a" $ink="#6c757d">
                <BsEnvelope size={24} />
                直接寄信
              </Button>
              <Button type="button" $edge="#2d9263" $ink="#198754">
                <BsArrowUp size={24} />
                回到頂部
              </Button>
            </Actions>
          </Card>
        </Page>
        <Scrollbar>
          <Triangle />
          <Thumb />
          <Triangle down />
        </Scrollbar>

        <Floating $top={272} $w={48} $h={48} $round $bg="#292b2a" />
        <Floating $top={329} $w={66} $h={60} $pad={19} $bg="#292b2a" $shadow="0 3px 15px rgba(0,0,0,.2)">
          <HookIcon />
        </Floating>
        <Floating $top={277} $w={71} $h={54} $pad={29} $bg="rgba(62,132,245,.92)" $shadow="0 3px 12px rgba(0,0,0,.15)">
          <Acorn />
        </Floating>
        <Floating $top={616} $w={54} $h={54} $round>
          <TranslateIcon />
        </Floating>
        <Floating $top={682} $w={54} $h={54} $round>
          <CloverIcon />
        </Floating>
        <Floating $top={748} $w={71} $h={54} $pad={13}>
          <BotIcon />
        </Floating>
      </Viewport>

      <Taskbar>
        <StartButton>
          <WindowsLogo />
        </StartButton>
        <SearchBox>
          <SearchGlyph />
          搜尋
        </SearchBox>
        <AppSlot>
          <TaskView />
        </AppSlot>
        <AppSlot>
          <Copilot />
        </AppSlot>
        <AppSlot>
          <Edge />
        </AppSlot>
        <AppSlot>
          <Store />
          <Badge $bg="#4cc2ff" $top={10} $left={35}>1</Badge>
        </AppSlot>
        <AppSlot>
          <LTile>L</LTile>
        </AppSlot>
        <AppSlot $open>
          <Folder />
        </AppSlot>
        <AppSlot $active>
          <ActiveTile>
            <Chrome />
          </ActiveTile>
        </AppSlot>
        <AppSlot $open>
          <Notepad />
        </AppSlot>
        <AppSlot $open>
          <VsCode />
        </AppSlot>
        <AppSlot $open>
          <GithubDesktop />
        </AppSlot>

        <Tray>
          <TraySlot $w={96}>
            <Weather />
            <Badge $bg="#ff99a4" $top={9} $left={45}>6</Badge>
          </TraySlot>
          <TraySlot $w={48}>
            <svg width="16" height="10" viewBox="0 0 16 10" fill="none" stroke="#fff" strokeWidth="2.200" strokeLinecap="round">
              <path d="M1 9l7-7 7 7" />
            </svg>
          </TraySlot>
          <TraySlot $w={48}>
            <OneDrive />
          </TraySlot>
          <TraySlot $w={48}>
            <SyncCloud />
          </TraySlot>
          <TraySlot $w={48}>
            <PlaneIcon />
          </TraySlot>
          <TraySlot $w={48}>英</TraySlot>
          <TraySlot $w={68}>ㄅ</TraySlot>
          <TraySlot $w={45}>
            <WifiIcon />
          </TraySlot>
          <TraySlot $w={28}>
            <MuteIcon />
          </TraySlot>
          <TraySlot $w={43}>
            <BatteryIcon />
          </TraySlot>
          <Clock>
            上午 10:34
            <br />
            2025/10/17
          </Clock>
        </Tray>
      </Taskbar>
    </Screen>
  );
}
